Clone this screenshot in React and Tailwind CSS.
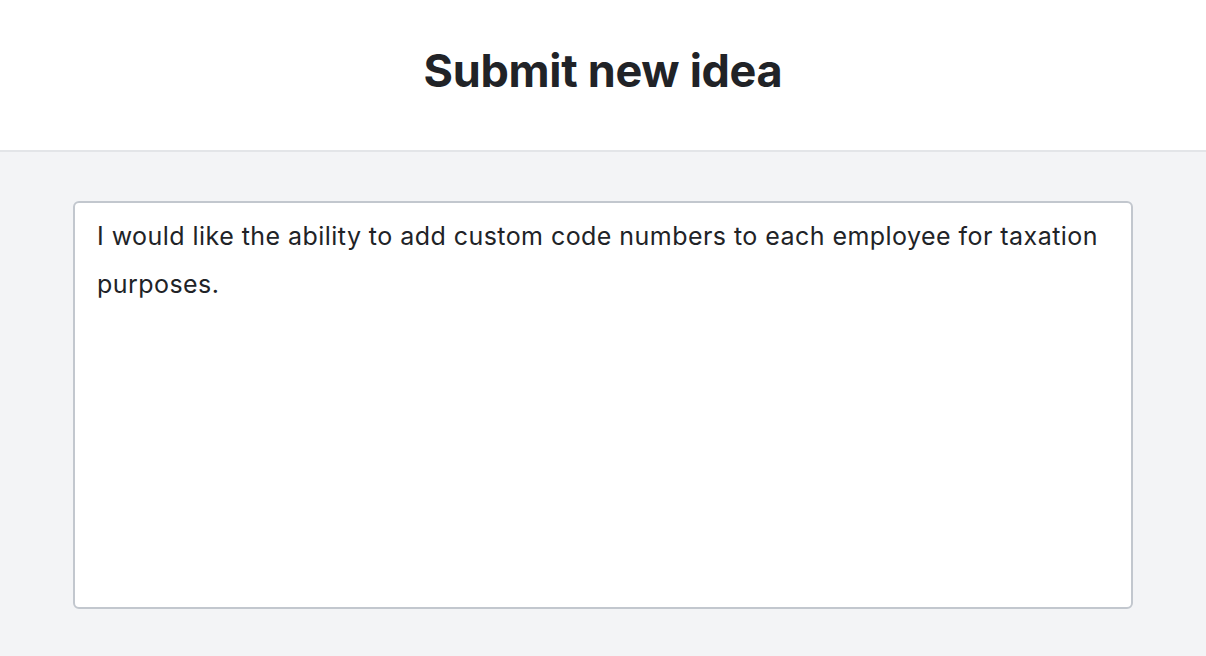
import React from 'react';

const App = () => {
  return (
    <div className="min-h-screen bg-[#f3f4f6]" style={{ fontFamily: 'Inter, "Noto Sans", sans-serif' }}>
      <header className="h-[152px] bg-white border-b-2 border-[#e3e5e8] flex items-center justify-center">
        <h1 className="text-[45px] font-bold text-[#212327] tracking-[-0.3px] pb-[8px]">Submit new idea</h1>
      </header>
      <main className="px-[73px] pt-[49px]">
        <textarea
          className="block w-full h-[408px] resize-none rounded-[6px] border-2 border-[#c2c7ce] bg-white px-[22px] py-[9px] text-[25px] leading-[48px] tracking-[0.45px] text-[#212327] outline-none"
          defaultValue="I would like the ability to add custom code numbers to each employee for taxation purposes."
        />
      </main>
    </div>
  );
};

export default App;
